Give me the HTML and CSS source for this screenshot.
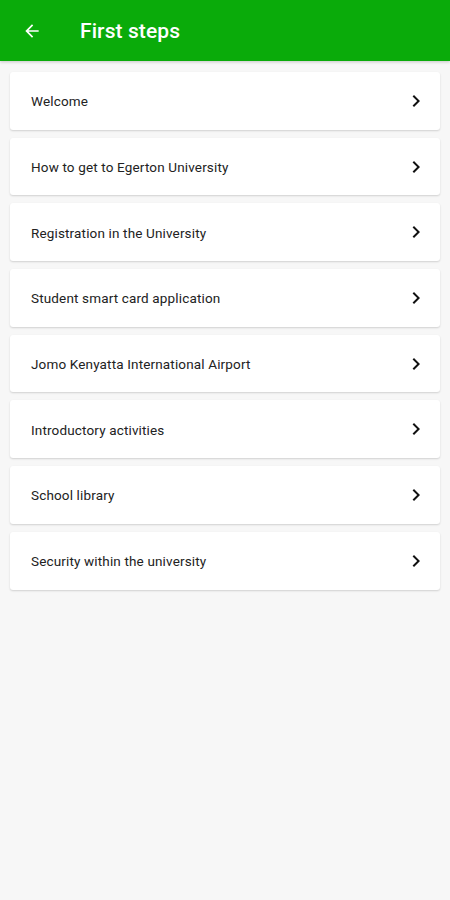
FILE: index.html
```html
<!DOCTYPE html>
<html lang="en">
<head>
    <meta charset="UTF-8">
    <meta name="viewport" content="width=device-width, initial-scale=1.0">
    <title>First steps</title>
    <link rel="stylesheet" href="styles.css">
</head>
<body>
    <header class="topbar">
        <svg class="back" width="20" height="20" viewBox="0 0 24 24">
            <path d="M20 11H7.83l5.59-5.59L12 4l-8 8 8 8 1.41-1.41L7.83 13H20v-2z" fill="#ffffff"/>
        </svg>
        <h1>First steps</h1>
    </header>

    <ul class="list">
        <li class="item"><span>Welcome</span><svg class="chev" viewBox="0 0 24 24"><path d="M8.59 16.59L13.17 12 8.59 7.41 10 6l6 6-6 6z"/></svg></li>
        <li class="item"><span>How to get to Egerton University</span><svg class="chev" viewBox="0 0 24 24"><path d="M8.59 16.59L13.17 12 8.59 7.41 10 6l6 6-6 6z"/></svg></li>
        <li class="item"><span>Registration in the University</span><svg class="chev" viewBox="0 0 24 24"><path d="M8.59 16.59L13.17 12 8.59 7.41 10 6l6 6-6 6z"/></svg></li>
        <li class="item"><span>Student smart card application</span><svg class="chev" viewBox="0 0 24 24"><path d="M8.59 16.59L13.17 12 8.59 7.41 10 6l6 6-6 6z"/></svg></li>
        <li class="item"><span>Jomo Kenyatta International Airport</span><svg class="chev" viewBox="0 0 24 24"><path d="M8.59 16.59L13.17 12 8.59 7.41 10 6l6 6-6 6z"/></svg></li>
        <li class="item"><span>Introductory activities</span><svg class="chev" viewBox="0 0 24 24"><path d="M8.59 16.59L13.17 12 8.59 7.41 10 6l6 6-6 6z"/></svg></li>
        <li class="item"><span>School library</span><svg class="chev" viewBox="0 0 24 24"><path d="M8.59 16.59L13.17 12 8.59 7.41 10 6l6 6-6 6z"/></svg></li>
        <li class="item"><span>Security within the university</span><svg class="chev" viewBox="0 0 24 24"><path d="M8.59 16.59L13.17 12 8.59 7.41 10 6l6 6-6 6z"/></svg></li>
    </ul>
</body>
</html>
```

FILE: styles.css
```css
body {
    font-family: Roboto, 'Liberation Sans', sans-serif;
    margin: 0;
    padding: 0;
    background-color: #f7f7f7;
    color: #222222;
    min-height: 900px;
}

.topbar {
    background-color: #0aab0a;
    height: 61px;
    display: flex;
    align-items: center;
    padding-left: 22px;
    box-shadow: 0 1px 3px rgba(0, 0, 0, 0.2);
}

.back {
    width: 20px;
    height: 20px;
    display: block;
}

.topbar h1 {
    margin: 0 0 0 38px;
    color: #ffffff;
    font-size: 21px;
    font-weight: 500;
    letter-spacing: 0.1px;
}

.list {
    list-style: none;
    margin: 0;
    padding: 11px 10px 0 10px;
    display: flex;
    flex-direction: column;
    gap: 8px;
}

.item {
    height: 57.7px;
    background-color: #ffffff;
    border-radius: 3px;
    box-shadow: 0 1px 2px rgba(0, 0, 0, 0.16);
    display: flex;
    align-items: center;
    justify-content: space-between;
    padding: 0 12px 0 21px;
    font-size: 13.5px;
    letter-spacing: 0.15px;
}

.item span {
    padding-top: 1px;
}

.chev {
    width: 24px;
    height: 24px;
    fill: #111111;
}
```
